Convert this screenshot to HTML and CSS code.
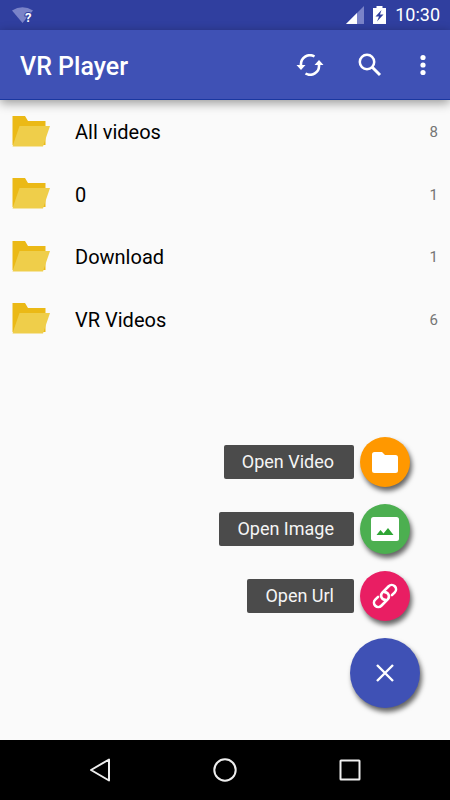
FILE: index.html
```
<!DOCTYPE html>
<html lang="en">
<head>
    <meta charset="UTF-8">
    <meta name="viewport" content="width=device-width, initial-scale=1.0">
    <title>VR Player</title>
    <link rel="stylesheet" href="styles.css">
</head>
<body>
    <div class="status-bar">
        <svg class="wifi-icon" width="26" height="26" viewBox="0 0 26 26">
            <path d="M0 8.500 Q10.500 2 21 8.500 L10.500 21Z" fill="#7a83c8"/>
            <text x="13" y="20" class="wifi-mark">?</text>
        </svg>
        <div class="status-right">
            <svg width="18" height="18" viewBox="0 0 18 18">
                <path d="M0 18 18 0V18Z" fill="#7a83c8"/>
                <path d="M0 18 11 7V18Z" fill="#fff"/>
            </svg>
            <svg width="13" height="18" viewBox="0 0 13 18">
                <path d="M0 2H3.500V0H9.500V2H13V18H0Z" fill="#fff"/>
                <path d="M8.500 4 2.500 10.500H6L4 15.500 10.500 8.500H7Z" fill="#303f9f"/>
            </svg>
            <span class="clock">10:30</span>
        </div>
    </div>

    <header class="app-bar">
        <h1 class="app-title">VR Player</h1>
        <div class="app-actions">
            <button class="icon-btn" aria-label="Refresh">
                <svg width="28" height="22" viewBox="0 0 28 22">
                    <path d="M18.500 2.500A9 9 0 0 0 5 11V12M9.500 19.500A9 9 0 0 0 23 11V10" fill="none" stroke="#fff" stroke-width="2.600"/>
                    <path d="M0.500 11H9.500L5 16ZM18.500 11H27.500L23 6Z" fill="#fff"/>
                </svg>
            </button>
            <button class="icon-btn" aria-label="Search">
                <svg width="24" height="24" viewBox="0 0 24 24">
                    <circle cx="9" cy="9" r="7.200" fill="none" stroke="#fff" stroke-width="2.500"/>
                    <path d="M14 14 22 22" stroke="#fff" stroke-width="3"/>
                </svg>
            </button>
            <button class="icon-btn" aria-label="More options">
                <svg width="6" height="22" viewBox="0 0 6 22">
                    <g fill="#fff">
                        <circle cx="3" cy="3.500" r="2.600"/>
                        <circle cx="3" cy="11" r="2.600"/>
                        <circle cx="3" cy="18.500" r="2.600"/>
                    </g>
                </svg>
            </button>
        </div>
    </header>

    <svg class="symbols" aria-hidden="true">
        <symbol id="folder" viewBox="0 0 38 31">
            <path d="M0.500 0H13L16 5H33.500V29H0.500Z" fill="#ebb916"/>
            <path d="M7.500 10H38L31 30.500H0.500Z" fill="#efce4a"/>
        </symbol>
    </svg>

    <main class="content">
        <ul class="folder-list">
            <li>
                <a href="#" class="folder-row">
                    <svg class="folder-icon"><use href="#folder"/></svg>
                    <span class="folder-name">All videos</span>
                    <span class="folder-count">8</span>
                </a>
            </li>
            <li>
                <a href="#" class="folder-row">
                    <svg class="folder-icon"><use href="#folder"/></svg>
                    <span class="folder-name">0</span>
                    <span class="folder-count">1</span>
                </a>
            </li>
            <li>
                <a href="#" class="folder-row">
                    <svg class="folder-icon"><use href="#folder"/></svg>
                    <span class="folder-name">Download</span>
                    <span class="folder-count">1</span>
                </a>
            </li>
            <li>
                <a href="#" class="folder-row">
                    <svg class="folder-icon"><use href="#folder"/></svg>
                    <span class="folder-name">VR Videos</span>
                    <span class="folder-count">6</span>
                </a>
            </li>
        </ul>

        <div class="fab-menu">
            <div class="fab-item">
                <label class="fab-label" for="openVideo">Open Video</label>
                <button class="fab fab-video" id="openVideo">
                    <svg width="26" height="21" viewBox="0 0 26 21">
                        <path d="M2.500 0H10L13 3H23.500A2.500 2.500 0 0 1 26 5.500V18.500A2.500 2.500 0 0 1 23.500 21H2.500A2.500 2.500 0 0 1 0 18.500V2.500A2.500 2.500 0 0 1 2.500 0Z" fill="#fff"/>
                    </svg>
                </button>
            </div>
            <div class="fab-item">
                <label class="fab-label" for="openImage">Open Image</label>
                <button class="fab fab-image" id="openImage">
                    <svg width="28" height="24" viewBox="0 0 28 24">
                        <rect width="28" height="24" rx="2.500" fill="#fff"/>
                        <path d="M5.500 18 9.500 13 12.500 16.500 17 11 22.500 18Z" fill="#2fa535"/>
                    </svg>
                </button>
            </div>
            <div class="fab-item">
                <label class="fab-label" for="openUrl">Open Url</label>
                <button class="fab fab-url" id="openUrl">
                    <svg width="26" height="26" viewBox="0 0 26 26">
                        <g transform="rotate(-45 13 13)" fill="none" stroke="#fff" stroke-width="2.600" stroke-linecap="round">
                            <path d="M18.500 17.300H22.500A4.300 4.300 0 0 0 22.500 8.700H13.500A4.300 4.300 0 0 0 10.500 16"/>
                            <path d="M7.500 8.700H3.500A4.300 4.300 0 0 0 3.500 17.300H12.500A4.300 4.300 0 0 0 15.500 10"/>
                        </g>
                    </svg>
                </button>
            </div>
            <button class="fab fab-main" aria-label="Close menu">
                <svg width="18" height="18" viewBox="0 0 18 18">
                    <path d="M1 1 17 17M17 1 1 17" stroke="#fff" stroke-width="2.400"/>
                </svg>
            </button>
        </div>
    </main>

    <nav class="nav-bar">
        <button class="nav-btn" aria-label="Back">
            <svg width="24" height="24" viewBox="0 0 24 24">
                <path d="M3 12 21 1.500V22.500Z"/>
            </svg>
        </button>
        <button class="nav-btn" aria-label="Home">
            <svg width="24" height="24" viewBox="0 0 24 24">
                <circle cx="12" cy="12" r="10.700"/>
            </svg>
        </button>
        <button class="nav-btn" aria-label="Recent apps">
            <svg width="24" height="24" viewBox="0 0 24 24">
                <rect x="2.500" y="2.500" width="19" height="19" rx="0.500"/>
            </svg>
        </button>
    </nav>
</body>
</html>
```
FILE: styles.css
```
:root {
    --primary: #3f51b5;
    --primary-dark: #303f9f;
    --page-bg: #fafafa;
    --label-bg: #4b4b4b;
}

* {
    margin: 0;
    padding: 0;
    box-sizing: border-box;
    font-family: Roboto, "Liberation Sans", sans-serif;
}

body {
    display: flex;
    flex-direction: column;
    min-height: 100vh;
    background-color: var(--page-bg);
    color: #000;
}

button {
    display: flex;
    align-items: center;
    justify-content: center;
    border: none;
    background: none;
    cursor: pointer;
}

.symbols {
    display: none;
}

/* Status bar */
.status-bar {
    display: flex;
    align-items: center;
    justify-content: space-between;
    height: 30px;
    padding: 0 10px 0 12px;
    background-color: var(--primary-dark);
    color: #fff;
}

.wifi-mark {
    font-size: 13px;
    font-weight: 700;
    fill: #fff;
    stroke: var(--primary-dark);
    stroke-width: 2px;
    paint-order: stroke;
}

.status-right {
    display: flex;
    align-items: center;
    gap: 9px;
}

.clock {
    font-size: 18px;
    line-height: 30px;
}

/* App bar */
.app-bar {
    display: flex;
    align-items: center;
    justify-content: space-between;
    height: 70px;
    padding: 0 12px 0 20px;
    background-color: var(--primary);
    border-bottom: 1px solid #1a37a0;
    box-shadow: 0 3px 10px rgba(0, 0, 0, 0.4);
    color: #fff;
    z-index: 1;
}

.app-title {
    padding-top: 4px;
    font-size: 25px;
    line-height: 32px;
    font-weight: 500;
}

.app-actions {
    display: flex;
}

.icon-btn {
    width: 60px;
    height: 48px;
}

.icon-btn:last-child {
    width: 30px;
    margin-left: 8px;
}

/* Folders */
.content {
    position: relative;
    flex: 1;
}

.folder-list {
    display: grid;
    grid-auto-rows: 1fr;
    height: 250px;
    list-style: none;
}

.folder-row {
    display: flex;
    align-items: center;
    height: 100%;
    padding: 0 12px;
    color: inherit;
    text-decoration: none;
}

.folder-icon {
    width: 38px;
    height: 31px;
    margin-right: 25px;
}

.folder-name,
.folder-count {
    padding-top: 2px;
    line-height: 24px;
}

.folder-name {
    flex: 1;
    font-size: 20px;
}

.folder-count {
    font-size: 15px;
    color: #757575;
}

/* Floating menu */
.fab-menu {
    position: absolute;
    right: 30px;
    bottom: 32px;
    display: flex;
    flex-direction: column;
    align-items: flex-end;
    gap: 17px;
}

.fab-item {
    display: flex;
    align-items: center;
    gap: 6px;
    padding-right: 10px;
}

.fab-label {
    padding: 5px 20px 5px 18px;
    border-radius: 2px;
    background-color: var(--label-bg);
    color: #f5f5f5;
    font-size: 18px;
    line-height: 24px;
    cursor: pointer;
}

.fab {
    width: 50px;
    height: 50px;
    border-radius: 50%;
    box-shadow: 2px 4px 5px rgba(0, 0, 0, 0.6);
}

.fab-video {
    background-color: #ff9800;
}

.fab-image {
    background-color: #4caf50;
}

.fab-url {
    background-color: #e91e63;
}

.fab-main {
    width: 70px;
    height: 70px;
    background-color: var(--primary);
}

/* Navigation bar */
.nav-bar {
    display: flex;
    justify-content: center;
    height: 60px;
    background-color: #000;
}

.nav-btn {
    flex: 0 1 125px;
}

.nav-btn svg {
    fill: none;
    stroke: #eee;
    stroke-width: 2px;
    stroke-linejoin: round;
}
```
